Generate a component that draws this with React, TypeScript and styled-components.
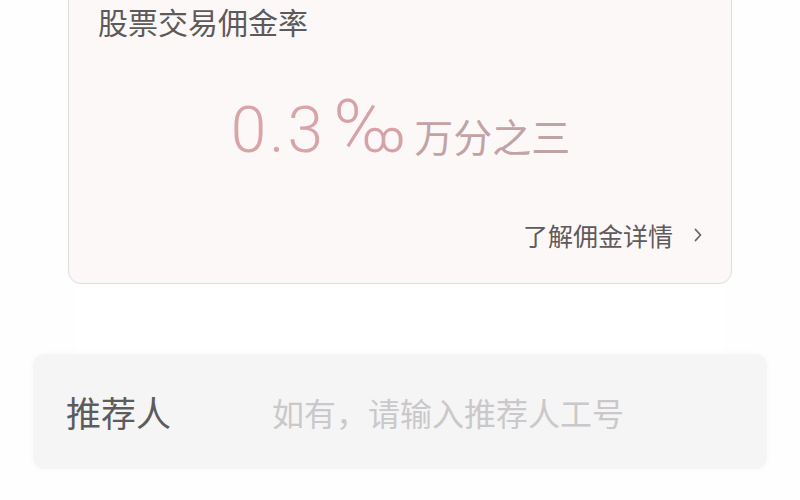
import React from "react";
import styled, { createGlobalStyle } from "styled-components";

const GlobalStyle = createGlobalStyle`
  html, body {
    margin: 0;
    padding: 0;
    background: #fefefe;
    overflow: hidden;
  }
  * { box-sizing: border-box; }
`;

const CJK = `"Noto Sans CJK SC", "Noto Sans", sans-serif`;

const Page = styled.div`
  width: 800px;
  height: 500px;
  display: flex;
  flex-direction: column;
  font-family: ${CJK};
`;

const RateCard = styled.div`
  margin: -24px 68px 0;
  height: 308px;
  padding: 24px 28px 0 29px;
  background: #fdf8f8;
  border: 1.5px solid #e2dcdc;
  border-radius: 13px;
  display: flex;
  flex-direction: column;
`;

const CardTitle = styled.div`
  font-size: 30px;
  line-height: 44px;
  margin-top: -2px;
  color: #5e5a5b;
`;

const RateRow = styled.div`
  margin-top: 46px;
  display: flex;
  align-items: baseline;
  justify-content: center;
  gap: 8px;
`;

const RateNumber = styled.span`
  font-family: Roboto, "Liberation Sans", sans-serif;
  font-weight: 300;
  font-size: 64px;
  line-height: 76px;
  color: #d9a4a7;
  letter-spacing: 3px;
`;

const RateUnit = styled.span`
  font-family: Roboto, "Liberation Sans", sans-serif;
  font-weight: 300;
  font-size: 74px;
  line-height: 76px;
  color: #d7a2a5;
`;

const RateNote = styled.span`
  font-size: 39px;
  color: #c1a3a6;
`;

const DetailLink = styled.div`
  margin-top: auto;
  margin-bottom: 30px;
  align-self: flex-end;
  display: flex;
  align-items: center;
  gap: 20px;
  font-size: 25px;
  color: #5f5a5b;
`;

const Gap = styled.div`
  height: 70px;
  margin: 0 75px;
  background: #ffffff;
`;

const InputRow = styled.label`
  margin: 0 33px;
  height: 115px;
  padding: 0 33px;
  background: #f5f5f6;
  border-radius: 12px;
  box-shadow: 0 0 6px rgba(0, 0, 0, 0.03);
  display: flex;
  align-items: center;
`;

const InputLabel = styled.span`
  width: 206px;
  font-size: 35px;
  color: #5e5b5d;
  flex-shrink: 0;
`;

const InputField = styled.input`
  flex: 1;
  border: none;
  outline: none;
  background: transparent;
  font-family: ${CJK};
  font-size: 32px;
  color: #333;
  padding: 0;

  &::placeholder {
    color: #cac8ca;
  }
`;

const Chevron = () => (
  <svg width="10" height="16" viewBox="0 0 10 16" fill="none">
    <path d="M2.5 2.5 L7.5 8 L2.5 13.5" stroke="#6a6464" strokeWidth="1.8" strokeLinecap="round" strokeLinejoin="round" />
  </svg>
);

export default function App() {
  return (
    <Page>
      <GlobalStyle />
      <RateCard>
        <CardTitle>股票交易佣金率</CardTitle>
        <RateRow>
          <RateNumber>0.3</RateNumber>
          <RateUnit>‰</RateUnit>
          <RateNote>万分之三</RateNote>
        </RateRow>
        <DetailLink>
          了解佣金详情
          <Chevron />
        </DetailLink>
      </RateCard>
      <Gap />
      <InputRow>
        <InputLabel>推荐人</InputLabel>
        <InputField placeholder="如有，请输入推荐人工号" />
      </InputRow>
    </Page>
  );
}
